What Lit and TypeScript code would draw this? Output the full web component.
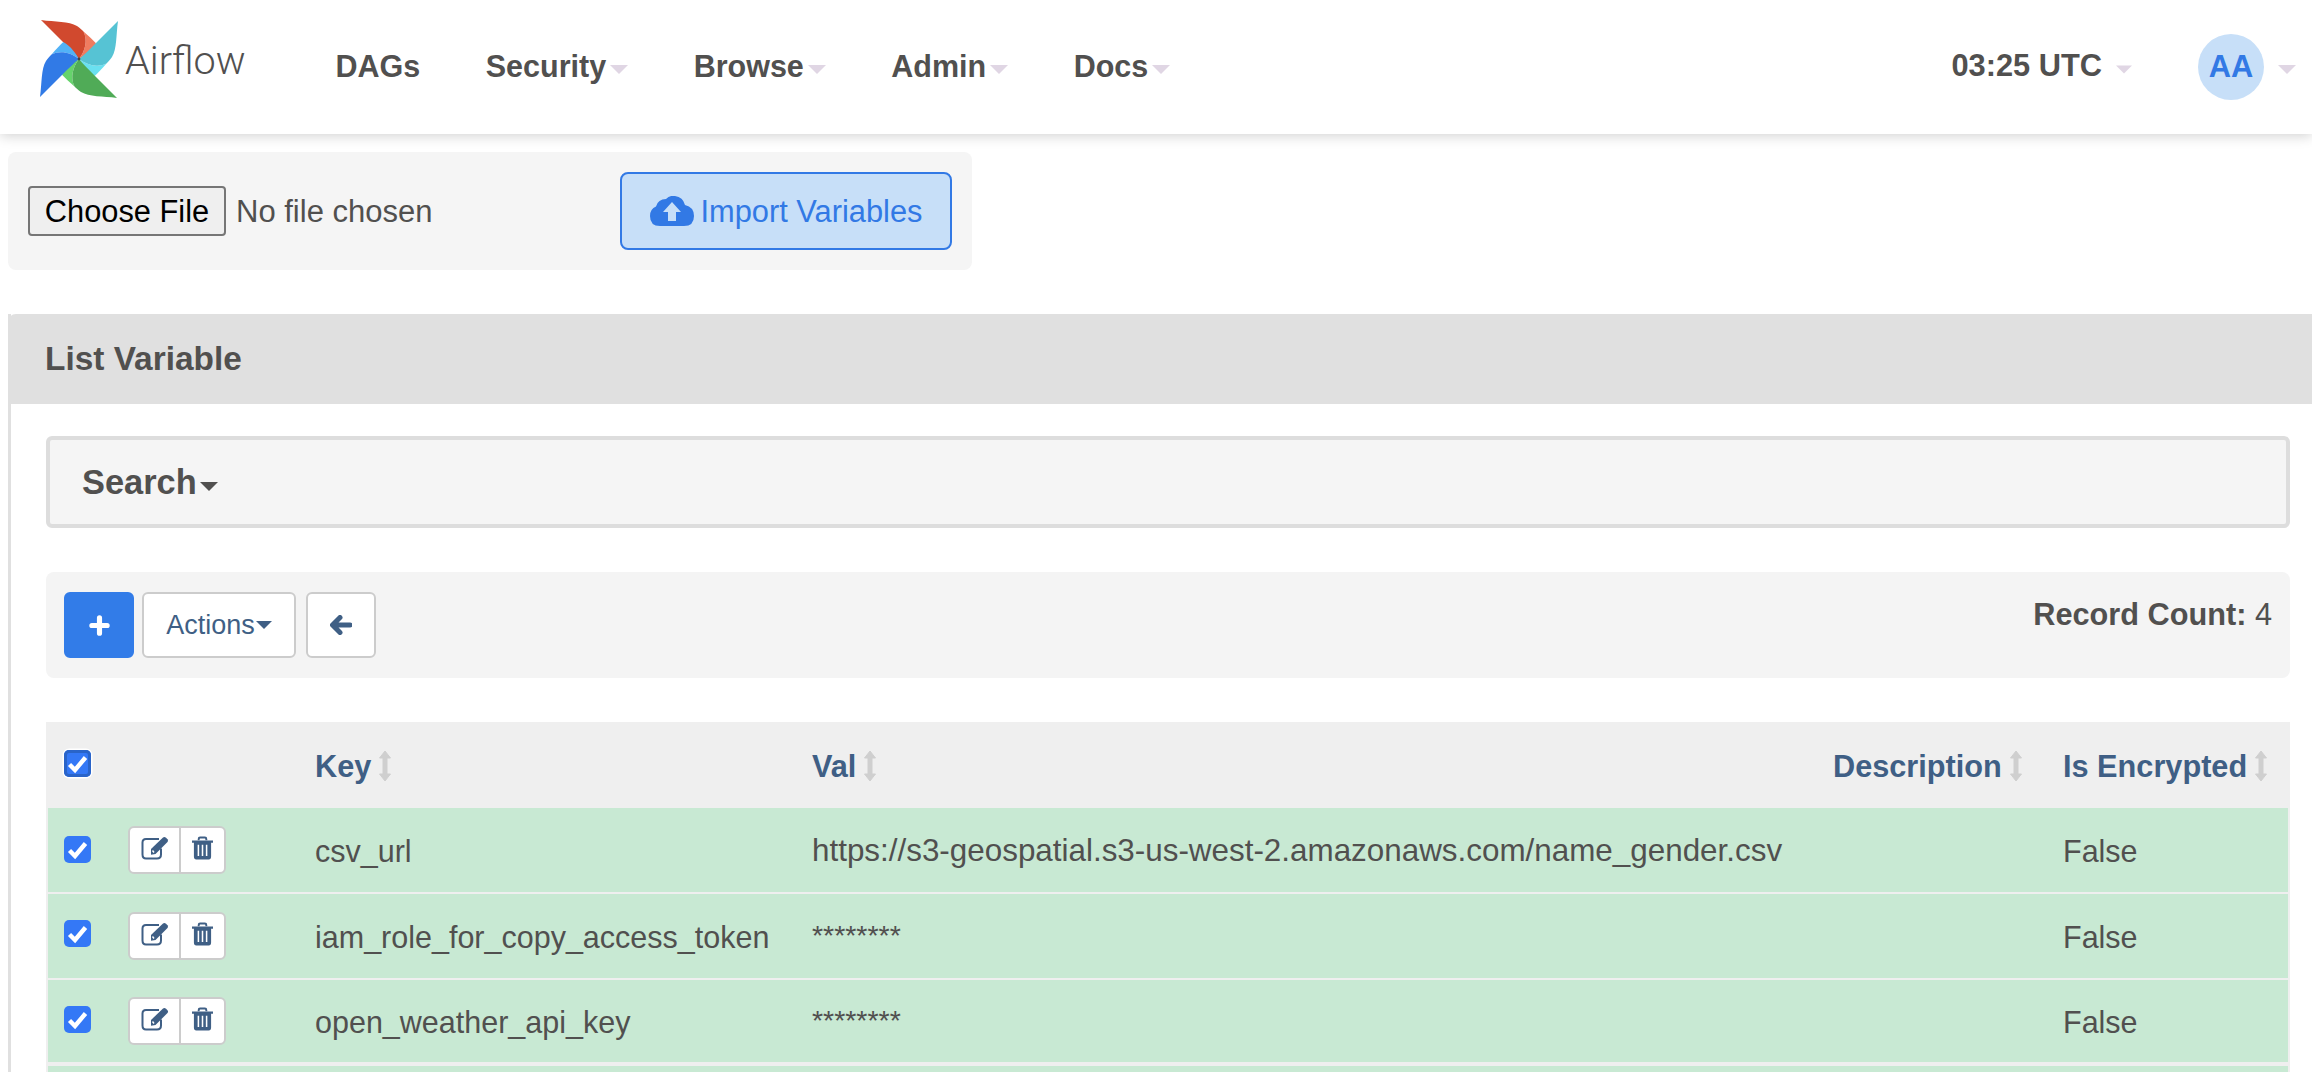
import { LitElement, html, css, svg } from "lit";
import { customElement } from "lit/decorators.js";

const blade = (main: string, light: string, rot: number) => svg`
  <g transform="rotate(${rot})">
    <path d="M4.5 -27.5 C9.5 -23 14 -19 17 -15.7 C13 -8 5 -3 0 0 C6 -8 9 -18 4.5 -27.5Z" fill=${light}></path>
    <path d="M-38 -39 C-24 -37 -10 -38 -2 -33 C1 -31 3 -29 4.5 -27.5 C9 -18 6 -8 0 0 C-4 -5 -10 -11 -15 -16Z" fill=${main}></path>
  </g>`;

const sortIcon = html`<svg class="sort" viewBox="0 0 12 32" width="12" height="32"><path d="M6 1 L11.5 8 H8 V24 H11.5 L6 31 L.5 24 H4 V8 H.5Z" fill="#cfcfcf" stroke="#cfcfcf" stroke-linejoin="round"></path></svg>`;

const caret = html`<svg class="caret" viewBox="0 0 18 9" width="18" height="9"><path d="M0 0H18L9 9Z" fill="#e0d6e4"></path></svg>`;

const check = html`<svg class="tick" viewBox="0 0 27 27" width="27" height="27"><path d="M5.5 14.5 L11 20 L21.5 7.5" fill="none" stroke="#fff" stroke-width="4.4"></path></svg>`;

const editIcon = html`<svg viewBox="0 0 28 24" width="28" height="24"><path d="M20 12.5 V18.5 Q20 22.5 16 22.5 H5 Q1.5 22.5 1.5 18.5 V6.5 Q1.5 3 5 3 H18" fill="none" stroke="#3f5f85" stroke-width="2"></path><path d="M10 13 L22 1.5 Q23.5 .3 25 1.7 L26.5 3.2 Q27.6 4.6 26.5 6 L14.5 18 L10 18.7Z" fill="#3f5f85"></path><path d="M11.5 14.5 L13 16.5" stroke="#fff" stroke-width="1.4"></path></svg>`;

const trashIcon = html`<svg viewBox="0 0 22 24" width="21" height="24"><path d="M7 4 V2.5 Q7 1 8.5 1 H13.5 Q15 1 15 2.5 V4" fill="none" stroke="#3f5f85" stroke-width="2"></path><path d="M0 4.2 H22 V6.4 H20 V21 Q20 24 17.5 24 H4.5 Q2 24 2 21 V6.4 H0Z" fill="#3f5f85"></path><path d="M6.7 8.5V20.5M11 8.5V20.5M15.3 8.5V20.5" stroke="#fff" stroke-width="1.6"></path></svg>`;

const rows: [string, string, string][] = [
  ["csv_url", "https://s3-geospatial.s3-us-west-2.amazonaws.com/name_gender.csv", "url"],
  ["iam_role_for_copy_access_token", "********", "mask"],
  ["open_weather_api_key", "********", "mask"],
];

@customElement("app-root")
export class AppRoot extends LitElement {
  static styles = css`
    :host {
      display: block;
      height: 1072px;
      overflow: hidden;
      background: #fff;
      font-family: "Liberation Sans", Arial, sans-serif;
      font-size: 30.5px;
      color: #51504f;
    }
    .nav {
      height: 134px;
      display: flex;
      align-items: center;
      background: #fff;
      box-shadow: 0 2px 12px rgba(0, 0, 0, 0.18);
      position: relative;
      box-sizing: border-box;
      padding-left: 39px;
    }
    .logo { display: block; margin-top: -16px; }
    .brand {
      font-family: Roboto, sans-serif;
      font-weight: 300;
      font-size: 39.6px;
      margin-left: 6px;
      margin-top: -14px;
      color: #51504f;
      width: 122px;
    }
    .menu {
      display: flex;
      gap: 65.5px;
      margin-left: 88.5px;
      margin-top: -2px;
      font-weight: 700;
      font-size: 30.5px;
      align-items: center;
    }
    .menu span, .right span { display: inline-flex; align-items: center; }
    .caret { margin-left: 4px; margin-top: 6px; }
    .right {
      margin-left: auto;
      display: flex;
      align-items: center;
      font-weight: 700;
      font-size: 30.8px;
      padding-right: 16px;
      margin-top: -2px;
    }
    .right .time .caret { margin-left: 14px; width: 16px; }
    .avatar {
      width: 66px;
      height: 66px;
      border-radius: 50%;
      background: #c7dff8;
      color: #3279e5;
      display: flex;
      align-items: center;
      justify-content: center;
      margin-left: 66px;
      margin-top: 2px;
    }
    .right > .caret { margin-left: 14px; }

    .import {
      margin: 18px 0 0 8px;
      width: 964px;
      height: 118px;
      box-sizing: border-box;
      background: #f5f5f5;
      border-radius: 8px;
      display: flex;
      align-items: center;
      padding: 0 20px;
    }
    .choose {
      width: 198px;
      height: 50px;
      box-sizing: border-box;
      border: 2px solid #767676;
      border-radius: 4px;
      background: #efefef;
      color: #000;
      font: inherit;
      font-size: 30.8px;
      padding: 2px 0 0;
    }
    .nofile { margin-left: 10px; font-size: 31px; padding-top: 1px; }
    .importbtn {
      margin-left: auto;
      width: 332px;
      height: 78px;
      box-sizing: border-box;
      border: 2px solid #3279e5;
      border-radius: 8px;
      background: #c7dff8;
      color: #3279e5;
      display: flex;
      align-items: center;
      justify-content: center;
      gap: 7px;
      font-size: 30.8px;
    }
    .importbtn span { padding-top: 2px; }
    .panel {
      margin: 44px 0 0 8px;
      border-left: 3px solid #e0e0e0;
      background: #fff;
    }
    .heading {
      margin-left: -3px;
      height: 90px;
      background: #e0e0e0;
      border-radius: 8px 0 0 0;
      display: flex;
      align-items: center;
      padding-left: 37px;
      font-weight: 700;
      font-size: 33.4px;
    }
    .body { padding: 32px 22px 0 35px; }
    .search {
      height: 92px;
      box-sizing: border-box;
      border: 4px solid #dddddd;
      border-radius: 6px;
      background: #f5f5f5;
      display: flex;
      align-items: center;
      padding-left: 32px;
      font-weight: 700;
      font-size: 34.4px;
      gap: 3px;
    }
    .toolbar {
      margin-top: 44px;
      height: 106px;
      box-sizing: border-box;
      background: #f4f4f4;
      border-radius: 8px;
      padding: 20px 18px;
      display: flex;
      gap: 8px;
      position: relative;
    }
    .btn {
      height: 66px;
      box-sizing: border-box;
      border: 2px solid #cccccc;
      border-radius: 6px;
      background: #fff;
      color: #3f5f85;
      display: flex;
      align-items: center;
      justify-content: center;
      font-size: 27px;
    }
    .add { width: 70px; background: #327ce8; border-color: #327ce8; }
    .actions { width: 154px; gap: 1px; }
    .back { width: 70px; margin-left: 2px; }
    .count { margin-left: auto; margin-top: -2px; line-height: 50px; font-size: 30.7px; }
    .count b { font-weight: 700; }

    .table { margin-top: 44px; background: #efefef; padding: 0 2px; }
    .row {
      display: grid;
      grid-template-columns: 80px 187px 497px 1021px 230px 1fr;
      align-items: center;
    }
    .head {
      height: 86px;
      margin: 0 -2px;
      padding-left: 2px;
      color: #3f5f85;
      font-weight: 700;
      font-size: 30.7px;
    }
    .head .cell { display: flex; align-items: center; gap: 8px; padding-top: 4px; }
    .sort { margin-top: -2px; }
    .data { height: 84px; background: #c8e9d3; margin-bottom: 2px; }
    .data.third { height: 82px; margin-bottom: 4px; }
    .data > span { padding-top: 2px; }
    .url { font-size: 31.4px; }
    .mask { font-size: 28.5px; margin-top: -4px; }
    .box {
      width: 27px;
      height: 27px;
      margin-left: 16px;
      border-radius: 5px;
      background: #3478f6;
      display: block;
    }
    .data > .box { padding-top: 0; }
    .box.r0 { margin-top: -2px; }
    .box.r1 { margin-top: -6px; }
    .box.r2 { margin-top: -4px; }
    .tick { display: block; }
    .box.focus {
      margin-top: -3px;
      background: #3478f6;
      box-shadow: inset 0 0 0 3px #2a64c8, 0 0 0 1.5px #fff;
    }
    .group {
      width: 98px;
      height: 48px;
      box-sizing: border-box;
      border: 2px solid #cccccc;
      border-radius: 6px;
      background: #fff;
      display: flex;
    }
    .group > span { display: flex; align-items: center; justify-content: center; }
    .group > span:first-child { width: 49px; border-right: 2px solid #cccccc; padding-bottom: 4px; box-sizing: content-box; height: 40px; }
    .group > span:last-child { flex: 1; padding-bottom: 4px; }
  `;

  render() {
    return html`
      <header class="nav">
        <svg class="logo" width="80" height="80" viewBox="-40 -40 80 80">
          ${blade("#d1492e", "#f07c60", 0)}
          ${blade("#56c3d4", "#6ae0f0", 90)}
          ${blade("#50ab57", "#66d36c", 180)}
          ${blade("#317ae6", "#52b2f7", 270)}
          <circle r="1.4" fill="#444"></circle>
        </svg>
        <span class="brand">Airflow</span>
        <nav class="menu">
          <span>DAGs</span>
          <span>Security${caret}</span>
          <span>Browse${caret}</span>
          <span>Admin${caret}</span>
          <span>Docs${caret}</span>
        </nav>
        <div class="right">
          <span class="time">03:25 UTC${caret}</span>
          <div class="avatar">AA</div>
          ${caret}
        </div>
      </header>

      <section class="import">
        <button class="choose">Choose File</button>
        <span class="nofile">No file chosen</span>
        <div class="importbtn">
          <svg viewBox="0 0 44 30" width="44" height="30"><path d="M10 30 Q0 30 0 20 Q0 13 6 10.5 Q8 3 16 3 Q20 -1 25 0 Q33 1 35 9 Q44 11 44 20 Q44 30 34 30Z" fill="#3279e5"></path><path d="M22 6 L31 16 H26 V25 H18 V16 H13Z" fill="#c7dff8"></path></svg>
          <span>Import Variables</span>
        </div>
      </section>

      <section class="panel">
        <div class="heading">List Variable</div>
        <div class="body">
          <div class="search">
            <span>Search</span>
            <svg viewBox="0 0 18 9" width="18" height="9" style="margin-top:8px"><path d="M0 0H18L9 9Z" fill="#51504f"></path></svg>
          </div>
          <div class="toolbar">
            <div class="btn add">
              <svg viewBox="0 0 22 22" width="21" height="21"><path d="M11 3V19M3 11H19" stroke="#fff" stroke-width="5.4" stroke-linecap="round"></path></svg>
            </div>
            <div class="btn actions">
              <span>Actions</span>
              <svg viewBox="0 0 16 8" width="16" height="8"><path d="M0 0H16L8 8Z" fill="#3f5f85"></path></svg>
            </div>
            <div class="btn back">
              <svg viewBox="0 0 22 20" width="22" height="20"><path d="M10 2.5 L2.5 10 L10 17.5 M3.5 10 H20" fill="none" stroke="#3f5f85" stroke-width="5" stroke-linecap="round" stroke-linejoin="round"></path></svg>
            </div>
            <div class="count"><b>Record Count:</b> 4</div>
          </div>
          <div class="table">
            <div class="row head">
              <span class="box focus">${check}</span>
              <span></span>
              <span class="cell">Key${sortIcon}</span>
              <span class="cell">Val${sortIcon}</span>
              <span class="cell">Description${sortIcon}</span>
              <span class="cell">Is Encrypted${sortIcon}</span>
            </div>
            ${rows.map(
              ([k, v, cls], i) => html`
                <div class="row data ${i === 2 ? "third" : ""}">
                  <span class="box r${i}">${check}</span>
                  <div class="group"><span>${editIcon}</span><span>${trashIcon}</span></div>
                  <span>${k}</span>
                  <span class=${cls}>${v}</span>
                  <span></span>
                  <span>False</span>
                </div>
              `
            )}
            <div class="row data"></div>
          </div>
        </div>
      </section>
    `;
  }
}
